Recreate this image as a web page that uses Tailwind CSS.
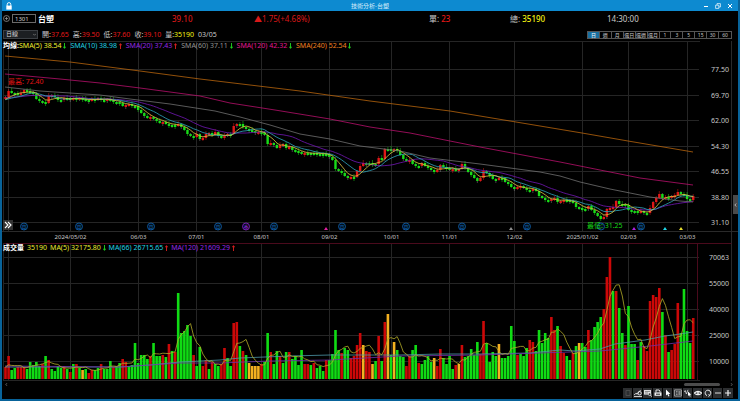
<!DOCTYPE html>
<html lang="zh-Hant">
<head>
    <meta charset="UTF-8">
    <meta name="viewport" content="width=device-width, initial-scale=1.0">
    <title>技術分析-台塑</title>
    <script src="https://cdn.jsdelivr.net/npm/@tailwindcss/browser@4"></script>
</head>
<body class="bg-black font-['Noto_Sans','Noto_Sans_CJK_TC',sans-serif] text-[7px] leading-[10px] text-[#c8c8c8]">
    <svg class="hidden">
        <symbol id="down" viewBox="0 0 3 6"><path d="M1.5 0v5M.2 3.6l1.3 1.8 1.3-1.8" fill="none" stroke="#20d820" stroke-width=".9"/></symbol>
        <symbol id="up" viewBox="0 0 3 6"><path d="M1.5 6V1M.2 2.4L1.5.6l1.3 1.8" fill="none" stroke="#e02020" stroke-width=".9"/></symbol>
    </svg>

    <div class="flex h-screen flex-col overflow-hidden border-x-2 border-b-2 border-[#08639a]">

        <!-- title bar -->
        <header class="grid h-[11px] shrink-0 grid-cols-3 items-center bg-[#0d8ad0] px-1 text-[#d5ecfa]">
            <svg class="h-[8px] w-[6px]" viewBox="0 0 6 8"><path d="M1.2 4V2.4a1.8 1.8 0 0 1 3.6 0V4" fill="none" stroke="#fff" stroke-width=".9"/><rect x=".3" y="3.6" width="5.4" height="4" fill="#fff"/></svg>
            <h1 class="text-center text-[6px]">技術分析-台塑</h1>
            <div class="flex justify-end gap-[3px]">
                <button type="button" aria-label="最小化" class="flex size-[9px] items-center justify-center"><svg class="size-[6px]" viewBox="0 0 6 6"><path d="M1 3.5h4" stroke="#fff"/></svg></button>
                <button type="button" aria-label="還原" class="flex size-[9px] items-center justify-center"><svg class="size-[6px]" viewBox="0 0 6 6" fill="none" stroke="#fff" stroke-width=".7"><path d="M.6 2.2h3.2v3.2H.6zM2 2V.6h3.4V4H4"/></svg></button>
                <button type="button" aria-label="關閉" class="flex size-[9px] items-center justify-center"><svg class="size-[6px]" viewBox="0 0 6 6"><path d="M1 1l4 4M5 1L1 5" stroke="#fff"/></svg></button>
            </div>
        </header>

        <!-- quote -->
        <div class="grid h-[15px] shrink-0 grid-cols-[170fr_82fr_175fr_81fr_97fr_131fr] items-center text-[8px]">
            <div class="flex items-center gap-[2px] pl-[1px]">
                <button type="button" aria-label="加入" class="size-[7px]"><svg class="size-[7px]" viewBox="0 0 7 7" fill="none" stroke="#a0a0a0" stroke-width=".7"><circle cx="3.5" cy="3.5" r="3"/><path d="M3.5 1.8v3.4M1.8 3.5h3.4"/></svg></button>
                <input type="text" value="1301" aria-label="股票代號" class="h-[9px] w-[24px] border border-[#6a6a6a] bg-black px-[2px] text-[6px] leading-[7px] text-[#d0d0d0]">
                <span class="font-bold text-white">台塑</span>
            </div>
            <span class="font-medium text-[#d81818]">39.10</span>
            <span class="text-[#d81818]">▲1.75(+4.68%)</span>
            <span>單: <span class="font-medium text-[#e81818]">23</span></span>
            <span>總: <span class="font-medium text-[#f4f410]">35190</span></span>
            <span>14:30:00</span>
        </div>

        <!-- period and day prices -->
        <div class="flex h-[15px] shrink-0 items-center justify-between pt-[2px] pr-[6px] pl-[1px]">
            <div class="flex items-center gap-[4px]">
                <div class="relative h-[9px] w-[35px]">
                    <select aria-label="週期" class="block h-[9px] w-full appearance-none border border-[#3c4044] bg-[#1c1f22] pl-[2px] text-[6px] leading-[7px] text-[#d8d8d8]"><option>日線</option><option>週線</option><option>月線</option></select>
                    <svg class="pointer-events-none absolute top-[3px] right-[2px] size-[3px]" viewBox="0 0 4 4"><path d="M0 1l2 2 2-2" fill="none" stroke="#999" stroke-width=".8"/></svg>
                </div>
                <span>開:<span class="text-[#e01818]">37.65</span></span>
                <span>高:<span class="text-[#e01818]">39.50</span></span>
                <span>低:<span class="text-[#e01818]">37.60</span></span>
                <span>收:<span class="text-[#e01818]">39.10</span></span>
                <span>量:<span class="text-[#f4f410]">35190</span></span>
                <span>03/05</span>
            </div>
            <nav class="grid h-[8px] w-[145px] grid-cols-12 divide-x divide-[#555] border border-[#555] text-[5px] leading-[6px]">
                <button type="button" class="bg-[#1a6f9f] text-white">日</button>
                <button type="button">週</button>
                <button type="button">月</button>
                <button type="button" class="whitespace-nowrap">還日</button>
                <button type="button" class="whitespace-nowrap">還週</button>
                <button type="button" class="whitespace-nowrap">還月</button>
                <button type="button">1</button>
                <button type="button">3</button>
                <button type="button">5</button>
                <button type="button">15</button>
                <button type="button">30</button>
                <button type="button">60</button>
            </nav>
        </div>

        <!-- price chart -->
        <section class="flex min-h-0 flex-[190_1_0%]">
            <div class="relative min-w-0 flex-1">
                <svg id="price" class="block size-full" viewBox="2 41 698 190" preserveAspectRatio="none"></svg>
                <div class="absolute top-0 left-[1px] flex gap-[4px] whitespace-nowrap">
                    <span class="text-[#f0f030]"><span class="font-bold text-white">均線:</span>SMA(5) 38.54 <svg class="inline h-[6px] w-[3px]"><use href="#down"/></svg></span>
                    <span class="text-[#20d0e0]">SMA(10) 38.98 <svg class="inline h-[6px] w-[3px]"><use href="#up"/></svg></span>
                    <span class="text-[#9428e4]">SMA(20) 37.43 <svg class="inline h-[6px] w-[3px]"><use href="#up"/></svg></span>
                    <span class="text-[#949494]">SMA(60) 37.11 <svg class="inline h-[6px] w-[3px]"><use href="#down"/></svg></span>
                    <span class="text-[#e01890]">SMA(120) 42.32 <svg class="inline h-[6px] w-[3px]"><use href="#down"/></svg></span>
                    <span class="text-[#f08020]">SMA(240) 52.54 <svg class="inline h-[6px] w-[3px]"><use href="#down"/></svg></span>
                </div>
                <button type="button" aria-label="展開" class="absolute bottom-[1px] left-[1px] flex size-[10px] items-center justify-center bg-[#333]"><svg class="size-[8px]" viewBox="0 0 8 8" fill="none" stroke="#fff" stroke-width="1.1"><path d="M1 1l3 3-3 3M4 1l3 3-3 3"/></svg></button>
            </div>
            <div id="price-axis" class="relative w-[32px] border-r border-[#2a2a2a]"></div>
            <div class="flex w-[6px] items-end justify-end pb-[17px]">
                <button type="button" aria-label="收合" class="flex h-[19px] w-[5px] items-center justify-center bg-[#4a4a4a]"><svg class="h-[4px] w-[3px]" viewBox="0 0 3 4"><path d="M2.4.5L.8 2l1.6 1.5" fill="none" stroke="#ddd" stroke-width=".7"/></svg></button>
            </div>
        </section>

        <div class="flex h-[12px] shrink-0 border-t border-[#2a2a2a]">
            <div id="dates" class="relative flex-1 text-[6px]"></div>
            <div class="w-[32px] border-r border-[#2a2a2a]"></div>
            <div class="w-[6px]"></div>
        </div>

        <!-- volume chart -->
        <section class="flex min-h-0 flex-[138_1_0%]">
            <div class="relative min-w-0 flex-1">
                <svg id="volume" class="block size-full" viewBox="2 243 698 138" preserveAspectRatio="none"></svg>
                <div class="absolute top-0 left-[1px] flex gap-[3px] whitespace-nowrap text-[#e8e830]">
                    <span class="font-bold text-white">成交量</span>
                    <span>35190</span>
                    <span>MA(5) 32175.80 <svg class="inline h-[6px] w-[3px]"><use href="#down"/></svg></span>
                    <span class="text-[#20d0e0]">MA(66) 26715.65 <svg class="inline h-[6px] w-[3px]"><use href="#up"/></svg></span>
                    <span class="text-[#9428e4]">MA(120) 21609.29 <svg class="inline h-[6px] w-[3px]"><use href="#up"/></svg></span>
                </div>
            </div>
            <div id="volume-axis" class="relative w-[32px] border-t border-r border-t-[#4a0a1c] border-r-[#2a2a2a]"></div>
            <div class="w-[6px]"></div>
        </section>

        <!-- scroll bar and tools -->
        <footer class="flex h-[18px] shrink-0 flex-col items-end pr-[5px]">
            <div class="flex h-[7px] w-full items-center justify-between pl-[3px]">
                <svg class="size-[3px]" viewBox="0 0 3 3"><path d="M2.4 0L.6 1.5 2.4 3" fill="none" stroke="#777" stroke-width=".7"/></svg>
                <div class="flex items-center gap-[10px]">
                    <div class="h-[3px] w-[36px] rounded-full bg-[#4c4c4c]"></div>
                    <svg class="size-[3px]" viewBox="0 0 3 3"><path d="M.6 0l1.8 1.5L.6 3" fill="none" stroke="#777" stroke-width=".7"/></svg>
                </div>
            </div>
            <div class="flex h-[10px] divide-x divide-black bg-[#2c2e30]">
                <button type="button" aria-label="鎖定" class="flex size-[10px] items-center justify-center"><svg class="size-[8px]" viewBox="0 0 8 8" fill="none" stroke="#4c4c4c"><path d="M2 6.5v-5h4v5z"/></svg></button>
                <button type="button" aria-label="畫線" class="flex size-[10px] items-center justify-center"><svg class="size-[8px]" viewBox="0 0 8 8" fill="none" stroke="#eee" stroke-width=".9"><path d="M0 6.2l2-2 1.2 1L6.5 1.2M0 7.6h8"/><circle cx="5.6" cy="4.2" r="1.7"/></svg></button>
                <button type="button" aria-label="表格" class="flex size-[10px] items-center justify-center"><svg class="size-[8px]" viewBox="0 0 8 8"><path d="M0 1h7v4.6H0z" fill="#ddd"/><path d="M1 2.5h5M1 4h3" stroke="#555" stroke-width=".6"/><circle cx="5.6" cy="5.2" r="1.3" fill="#333" stroke="#eee" stroke-width=".7"/><path d="M6.5 6.2l1.3 1.5" stroke="#eee"/></svg></button>
                <button type="button" aria-label="列印" class="flex size-[10px] items-center justify-center"><svg class="size-[8px]" viewBox="0 0 8 8"><path d="M2 3.4V1h3l1 1v1.4" fill="none" stroke="#eee" stroke-width=".9"/><path d="M.5 3.4h7v3.4h-7z" fill="#eee"/><path d="M2 5.2h4" stroke="#222"/></svg></button>
                <button type="button" aria-label="游標" class="flex size-[10px] items-center justify-center"><svg class="size-[8px]" viewBox="0 0 8 8"><path d="M2 .5v6l1.4-1.2 1 2.2 1.1-.5-1-2.1h1.9z" fill="#fff"/></svg></button>
                <button type="button" aria-label="數值視窗" class="flex size-[10px] items-center justify-center"><svg class="size-[8px]" viewBox="0 0 8 8" fill="none" stroke="#ccc" stroke-width=".7"><path d="M.6.9h6.8v6.2H.6z"/><path d="M2 2.4h1.6M2 4h1.6M2 5.6h1.6M5 2v4M6 2v4"/></svg></button>
                <button type="button" aria-label="選取線段" class="flex size-[10px] items-center justify-center"><svg class="size-[8px]" viewBox="0 0 8 8"><path d="M0 3l1.2-1.5L2.4 5 4 .8" fill="none" stroke="#ddd" stroke-width=".8"/><path d="M4 2.5v4.6l1.1-1 .8 1.6.8-.4-.8-1.5h1.4z" fill="#fff"/></svg></button>
                <button type="button" aria-label="顯示" class="flex size-[10px] items-center justify-center"><svg class="size-[8px]" viewBox="0 0 8 8"><path d="M.4 4Q4 .6 7.6 4 4 7.4.4 4z" fill="none" stroke="#eee" stroke-width="1.1"/><circle cx="4" cy="4" r="1" fill="#eee"/></svg></button>
                <button type="button" aria-label="重新整理" class="flex size-[10px] items-center justify-center"><svg class="size-[8px]" viewBox="0 0 8 8" fill="none" stroke="#eee"><path d="M3 6.6A2.8 2.8 0 1 1 5.4 6.4M4.4 7.4l1.4-1-1.2-1.2"/></svg></button>
                <button type="button" aria-label="縮小" class="flex size-[10px] items-center justify-center"><svg class="size-[8px]" viewBox="0 0 8 8"><path d="M1 4h6" stroke="#ddd"/></svg></button>
                <button type="button" aria-label="放大" class="flex size-[10px] items-center justify-center"><svg class="size-[8px]" viewBox="0 0 8 8"><path d="M1 4h6M4 1v6" stroke="#eee" stroke-width="1.2"/></svg></button>
            </div>
        </footer>
    </div>

    <script>
        // volume bars: colour letter + height
        const volumes = ('r12 r23 g9 g11 r12 r12 r12 g10 g17 g14 g17 g13 r15 g23 r19 g10 g8 g13 g11 r13 ' +
            'g10 r7 g15 r15 g11 y9 g10 r6 r9 g9 g11 r15 g10 g10 g18 r12 g13 g16 r20 r17 ' +
            'g13 g14 g36 g16 g24 g24 g20 r23 g36 g23 g23 r24 g22 r35 g28 r27 g86 g46 g48 g54 ' +
            'g43 r24 g13 g32 r13 r19 g10 r17 g15 g13 r15 r31 g21 g13 r56 r57 g33 r28 g24 y16 ' +
            'y13 y13 y13 r15 g17 g46 r27 g15 g28 r23 g16 g27 r27 g20 g23 g14 g29 r15 r15 g14 ' +
            'r16 g11 g13 g8 r19 g19 g25 g49 g29 r26 g31 g29 r21 r23 r34 r46 y34 r28 r27 y15 ' +
            'g18 r43 g18 r57 y65 g24 y37 g29 g23 g22 r13 r23 g29 g34 r16 g15 g19 g23 g17 y21 ' +
            'r13 r30 g21 g15 g23 g10 r14 y15 r34 g22 g23 g30 g24 g37 r25 r58 g36 g17 g27 g23 ' +
            'y35 g21 g21 g23 g53 g38 r24 g25 g23 g31 r39 r37 g28 g49 g36 g46 g41 r62 r49 g53 ' +
            'r33 r26 g23 g19 r26 g33 y36 g36 g32 r49 g39 g52 g57 g62 r70 r102 r122 g88 r88 g71 ' +
            'g46 r34 g73 g35 g35 r19 g37 r33 r28 r78 r84 r82 r91 g67 r44 g27 r29 r35 r76 g46 ' +
            'g90 g48 g36 r61').split(' ').map(v => ({ color: v[0], h: Number(v.slice(1)) }));

        // closing prices on the chart's vertical scale
        const closes = [
            97, 91, 93, 93, 94, 93, 90, 91, 92, 94, 99, 101, 102, 103, 96, 95, 97, 100, 100, 98,
            98, 99, 98, 100, 98, 99, 100, 101, 99, 99, 98, 100, 100, 99, 100, 102, 102, 103, 106, 105,
            104, 106, 106, 110, 113, 116, 118, 117, 119, 121, 123, 122, 124, 125, 125, 126, 124, 127, 130, 134,
            136, 137, 134, 139, 138, 134, 133, 135, 132, 136, 138, 136, 134, 134, 126, 124, 124, 127, 129, 130,
            131, 133, 132, 132, 135, 144, 143, 145, 148, 145, 144, 148, 147, 150, 151, 152, 154, 153, 153, 153,
            153, 154, 154, 154, 154, 157, 160, 169, 171, 173, 176, 178, 177, 177, 171, 166, 163, 163, 163, 164,
            164, 158, 159, 149, 149, 150, 149, 151, 155, 159, 161, 160, 164, 166, 166, 163, 166, 168, 170, 172,
            170, 165, 167, 168, 170, 169, 170, 169, 164, 168, 172, 175, 178, 181, 178, 171, 173, 176, 179, 179,
            178, 178, 182, 184, 187, 189, 187, 186, 188, 190, 190, 189, 191, 196, 198, 200, 201, 199, 198, 202,
            201, 200, 200, 201, 203, 207, 208, 209, 209, 206, 210, 213, 216, 219, 217, 209, 208, 207, 201, 204,
            204, 205, 210, 211, 211, 212, 211, 213, 213, 208, 202, 198, 194, 198, 197, 197, 196, 195, 192, 194,
            195, 199, 200, 196];

        const gridX = [8, 70, 138, 196, 261, 329, 391, 449, 514, 582, 628, 687];
        const priceTicks = [['77.50', 69], ['69.70', 95], ['62.00', 120], ['54.30', 146], ['46.55', 171], ['38.80', 197], ['31.10', 222]];
        const volumeTicks = [['70063', 257], ['55000', 283], ['40000', 309], ['25000', 335], ['10000', 361]];
        const dates = [['2024/05/02', 70], ['06/03', 138], ['07/01', 196], ['08/01', 261], ['09/02', 329], ['10/01', 391],
            ['11/01', 449], ['12/02', 514], ['2025/01/02', 582], ['02/03', 628], ['03/03', 687]];
        const colors = { r: '#cc0808', g: '#10dc14', y: '#f4b020' };

        const barX = i => 5.5 + i * 3.084;

        function average(values, n, pad) {
            return values.map((_, i) => {
                let sum = 0;
                for (let k = i - n + 1; k <= i; k++) sum += k < 0 ? pad : values[k];
                return [barX(i), sum / n];
            });
        }

        function line(points, color) {
            return `<polyline points="${points.map(p => p.join(',')).join(' ')}" fill="none" stroke="${color}" stroke-width=".8"/>`;
        }

        function grid(ticks, top, bottom) {
            return gridX.map(x => `<path d="M${x + .5} ${top}V${bottom}" stroke="#252525"/>`).join('') +
                ticks.map(t => `<path d="M3 ${t[1] + .5}H699" stroke="#252525"/>`).join('');
        }

        // price chart
        let price = grid(priceTicks, 41, 231) + '<path d="M3 41.5H700M3.5 41V231" stroke="#252525"/>';
        closes.forEach((c, i) => {
            const open = i ? closes[i - 1] : 99;
            const color = c < open ? '#e01818' : '#18dc18';
            const top = Math.min(open, c);
            const h = Math.max(2, Math.abs(open - c));
            const x = barX(i);
            price += `<path d="M${x} ${top - 1 - i * 7 % 3}V${top + h + 1 + i * 5 % 2}" stroke="${i % 3 ? color : '#888'}" stroke-width=".5"/>`;
            price += `<rect x="${x - 1.2}" y="${top}" width="2.4" height="${h}" fill="${color}"/>`;
        });
        price += line(average(closes, 20, 98), '#7418b8');
        price += line(average(closes, 10, 100), '#30a8c0');
        price += line(average(closes, 5, 100), '#dcc840');
        price += line([[5, 87], [40, 91], [100, 95], [130, 99], [170, 104], [215, 111], [240, 117], [270, 125], [300, 134], [330, 139],
            [360, 146], [400, 151], [430, 158], [480, 164], [540, 172], [560, 176], [580, 182], [610, 189], [650, 197], [680, 201], [693, 202]], '#707070');
        price += line([[5, 74], [60, 79], [100, 83], [140, 88], [200, 96], [230, 103], [275, 110], [330, 119], [370, 127], [410, 133],
            [450, 141], [480, 147], [560, 162], [600, 170], [640, 178], [693, 185]], '#b8106c');
        price += line([[5, 56], [70, 62], [140, 71], [200, 79], [250, 85], [300, 91], [370, 101], [450, 111], [510, 121], [582, 133], [628, 141], [693, 152]], '#b8640c');

        // month and quarter marks; the one under the low-price label is only a ring
        [[24, '月'], [79, '月'], [151, '月'], [218, '月'], [246, '季'], [274, '月'], [342, '月'], [406, '月'], [462, '月'], [527, '月'], [601, ''], [641, '月']].forEach(([x, label]) => {
            const color = label === '季' ? '#9020d0' : '#0e62b0';
            price += `<circle cx="${x}" cy="226.5" r="3.5" fill="#04101c" stroke="${color}" stroke-width=".8"/>`;
            if (label) price += `<text x="${x}" y="228.5" text-anchor="middle" font-size="5" fill="${color}">${label}</text>`;
        });
        [[326, '#e020a0'], [511, '#909090'], [634, '#b020e0'], [665, '#20d8e8'], [681, '#e8e030']].forEach(([x, color]) => {
            price += `<path d="M${x - 2} 230h4l-2-3z" fill="${color}"/>`;
        });
        price += '<text x="8" y="84" font-size="7" fill="#e01414">最高: 72.40</text>';
        price += '<text x="587" y="228" font-size="7" fill="#18d818">最低: 31.25</text>';
        document.getElementById('price').innerHTML = price;

        // volume chart
        let volume = grid(volumeTicks, 243, 381) +
            '<path d="M3 243.5H700M697.5 243V381" stroke="#4a0a1c"/><path d="M3 380.5H700M3.5 243V381" stroke="#252525"/>';
        volumes.forEach((v, i) => {
            volume += `<rect x="${barX(i) - 1.3}" y="${379 - v.h}" width="2.6" height="${v.h}" fill="${colors[v.color]}"/>`;
        });
        volume += line([[5, 367], [60, 367], [120, 367], [150, 365], [180, 362], [220, 360], [240, 358], [290, 356], [330, 355], [400, 355], [440, 354],
            [480, 354], [530, 353], [560, 350], [575, 351], [600, 349], [615, 344], [645, 340], [665, 336], [680, 334], [693, 332]], '#4c98a8');
        volume += line([[5, 366], [120, 367], [180, 363], [220, 363], [270, 361], [330, 360], [400, 356], [480, 355], [540, 353], [600, 351], [650, 346], [693, 341]], '#7030a8');
        volume += line(average(volumes.map(v => v.h), 5, 12).map(([x, h]) => [x, 379 - h]), '#b4ac28');
        document.getElementById('volume').innerHTML = volume;

        function axis(id, ticks, top, height) {
            document.getElementById(id).innerHTML = ticks.map(([label, y]) =>
                `<span class="absolute right-[2px] -translate-y-1/2" style="top: ${(y + .5 - top) / height * 100}%">${label}</span>`).join('');
        }
        axis('price-axis', priceTicks, 41, 190);
        axis('volume-axis', volumeTicks, 243, 138);
        document.getElementById('dates').innerHTML = dates.map(([label, x]) =>
            `<span class="absolute -translate-x-1/2" style="left: ${(x - 1.5) / 698 * 100}%">${label}</span>`).join('');
    </script>
</body>
</html>
